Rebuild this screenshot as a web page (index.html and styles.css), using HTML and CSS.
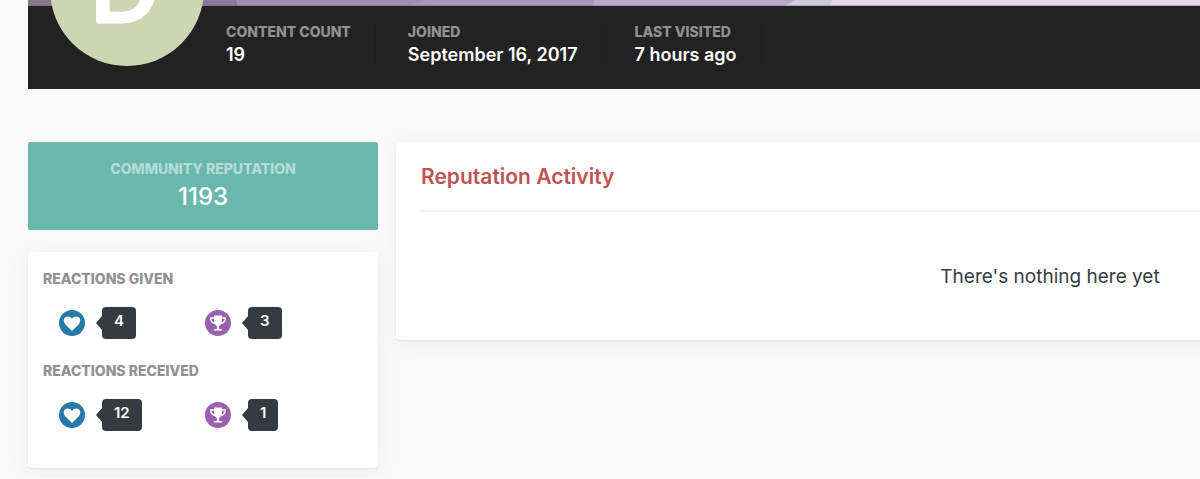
FILE: index.html
```html
<!DOCTYPE html>
<html lang="en">
<head>
  <meta charset="UTF-8" />
  <meta name="viewport" content="width=device-width, initial-scale=1.0"/>
  <title>Member Profile</title>
  <link rel="stylesheet" href="styles.css">
</head>
<body>
  <!-- Shared icons -->
  <svg class="sprite" aria-hidden="true">
    <symbol id="icon-like" viewBox="0 0 26 26">
      <circle cx="13" cy="13" r="13" fill="#2879a8"/>
      <path d="M13 21 6.200 14.200C4.200 12 4.200 9.200 5.900 7.600 7.900 5.900 11.200 6.300 13 8.900 14.800 6.300 18.100 5.900 20.100 7.600 21.800 9.200 21.800 12 19.800 14.200Z" fill="#fff"/>
    </symbol>
    <symbol id="icon-thanks" viewBox="0 0 26 26">
      <circle cx="13" cy="13" r="13" fill="#9a61ad"/>
      <path d="M9 5.500h8v4.500c0 3.200-1.300 5.300-3 5.900v2.100c0 .7.600 1.100 1.500 1.100 1 0 1.700.5 1.700 1.500H8.800c0-1 .7-1.500 1.700-1.500.9 0 1.500-.4 1.500-1.100v-2.100c-1.700-.6-3-2.700-3-5.900z" fill="#fff"/>
      <path d="M9 8H5.700c0 3 1.500 5 4.600 5.300M17 8h3.300c0 3-1.500 5-4.600 5.300" fill="none" stroke="#fff" stroke-width="1.400"/>
    </symbol>
  </svg>

  <div class="page">
    <!-- Profile header -->
    <header class="profile-header">
      <svg class="cover" viewBox="0 0 1676 6" preserveAspectRatio="none" aria-hidden="true">
        <rect width="1676" height="6" fill="#e5d9ea"/>
        <path d="M0 0h804l-2 6H0z" fill="#d1c9de"/>
        <path d="M0 0h768l-12 6H0z" fill="#bba9cb"/>
        <path d="M0 0h566l-1 6H0z" fill="#a498bd"/>
        <path d="M0 0h400l-24 6H0z" fill="#9d90b7"/>
        <path d="M0 0h208l2 6H0z" fill="#897898"/>
        <path d="M0 0h100v6H0z" fill="#8a748e"/>
        <rect y="5" width="1676" height="1" fill="#6b6680" opacity=".4"/>
      </svg>
      <svg class="avatar" viewBox="0 0 154 154" role="img" aria-label="Profile photo">
        <circle cx="77" cy="77" r="77" fill="#ced5b2"/>
        <text class="avatar-letter" x="74" y="109">D</text>
      </svg>
      <dl class="stats">
        <div class="stat">
          <dt class="label">Content Count</dt>
          <dd class="stat-value">19</dd>
        </div>
        <div class="stat">
          <dt class="label">Joined</dt>
          <dd class="stat-value">September 16, 2017</dd>
        </div>
        <div class="stat">
          <dt class="label">Last visited</dt>
          <dd class="stat-value">7 hours ago</dd>
        </div>
      </dl>
    </header>

    <div class="columns">
      <aside class="sidebar">
        <div class="reputation">
          <h2 class="label">Community Reputation</h2>
          <p class="reputation-count">1193</p>
        </div>

        <div class="panel reactions">
          <h2 class="label">Reactions Given</h2>
          <ul class="reaction-list">
            <li class="reaction">
              <svg class="reaction-icon" role="img" aria-label="Like"><use href="#icon-like"/></svg>
              <span class="count">4</span>
            </li>
            <li class="reaction">
              <svg class="reaction-icon" role="img" aria-label="Thanks"><use href="#icon-thanks"/></svg>
              <span class="count">3</span>
            </li>
          </ul>
          <h2 class="label">Reactions Received</h2>
          <ul class="reaction-list">
            <li class="reaction">
              <svg class="reaction-icon" role="img" aria-label="Like"><use href="#icon-like"/></svg>
              <span class="count">12</span>
            </li>
            <li class="reaction">
              <svg class="reaction-icon" role="img" aria-label="Thanks"><use href="#icon-thanks"/></svg>
              <span class="count">1</span>
            </li>
          </ul>
        </div>
      </aside>

      <main class="panel activity">
        <h2 class="activity-title">Reputation Activity</h2>
        <p class="empty">There's nothing here yet</p>
      </main>
    </div>
  </div>
</body>
</html>
```
FILE: styles.css
```css
* {
  margin: 0;
  padding: 0;
  box-sizing: border-box;
}
body {
  font-family: Inter, "Liberation Sans", sans-serif;
  background: #fafafa;
  color: #353c41;
  overflow-x: hidden;
}
.sprite {
  position: absolute;
  width: 0;
  height: 0;
}

/* Profiles are laid out for wide screens */
.page {
  min-width: 1732px;
  padding: 0 28px;
}

.label {
  font-size: 14px;
  font-weight: 800;
  line-height: 19px;
  text-transform: uppercase;
  color: #919191;
}

/* Header */
.profile-header {
  position: relative;
  background: #222222;
}
.cover {
  display: block;
  width: 100%;
  height: 6px;
}
.avatar {
  position: absolute;
  left: 22px;
  bottom: 23px;
  width: 154px;
  height: 154px;
}
.avatar-letter {
  font-family: Lato, "Liberation Sans", sans-serif;
  font-size: 88px;
  text-anchor: middle;
  fill: #ffffff;
  stroke: #ffffff;
  stroke-width: 5px;
  stroke-linejoin: round;
}
.stats {
  display: flex;
  gap: 32px;
  padding: 16px 0 20px 198px;
}
.stat {
  padding-right: 24px;
  border-right: 1px solid #1f1f1f;
}
.stat-value {
  font-size: 18px;
  font-weight: 600;
  line-height: 28px;
  color: #ffffff;
}

/* Columns */
.columns {
  display: flex;
  align-items: flex-start;
  gap: 18px;
  padding: 53px 0 10px;
}
.sidebar {
  flex: 0 0 350px;
}
.panel {
  background: #ffffff;
  border-radius: 4px;
  box-shadow: 0 1px 2px rgba(0, 0, 0, 0.08), 0 4px 24px rgba(0, 0, 0, 0.05);
}

.reputation {
  padding: 17px 16px 14px;
  margin-bottom: 22px;
  border-radius: 2px;
  background: #69b8ae;
  color: #ffffff;
  text-align: center;
}
.reputation .label {
  color: #b4dbd7;
}
.reputation-count {
  font-size: 24px;
  font-weight: 500;
  line-height: 38px;
}

/* Reactions */
.reactions {
  padding: 17px 15px 15px;
}
.reaction-list {
  display: flex;
  list-style: none;
  padding: 19px 0 22px 16px;
}
.reaction {
  display: flex;
  flex: 0 0 146px;
  align-items: center;
  gap: 17px;
}
.reaction-icon {
  width: 26px;
  height: 26px;
}
.count {
  position: relative;
  padding: 0 12px 4px;
  border-radius: 4px;
  background: #353c41;
  color: #ffffff;
  font-size: 15px;
  font-weight: 600;
  line-height: 28px;
}
.count::before {
  content: "";
  position: absolute;
  top: 9px;
  left: -6px;
  border: solid transparent;
  border-width: 7px 6px 7px 0;
  border-right-color: #353c41;
}

/* Activity */
.activity {
  flex: 1;
  padding: 17px 25px 48px;
}
.activity-title {
  padding-bottom: 15px;
  border-bottom: 2px solid #f5f5f5;
  color: #bf5352;
  font-size: 21px;
  font-weight: 600;
  line-height: 36px;
}
.empty {
  padding-top: 50px;
  font-size: 19px;
  line-height: 30px;
  text-align: center;
}
```
